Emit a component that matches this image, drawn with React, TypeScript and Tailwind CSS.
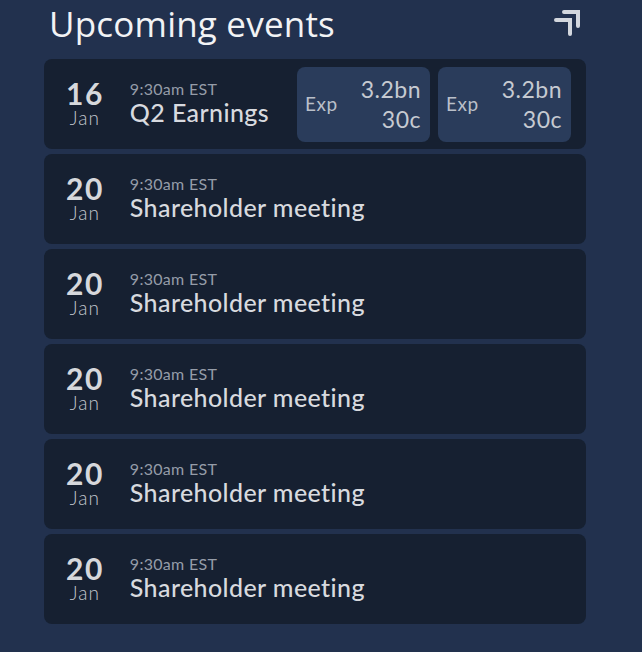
const events = [
  { day: '16', month: 'Jan', time: '9:30am EST', title: 'Q2 Earnings', expected: true },
  { day: '20', month: 'Jan', time: '9:30am EST', title: 'Shareholder meeting' },
  { day: '20', month: 'Jan', time: '9:30am EST', title: 'Shareholder meeting' },
  { day: '20', month: 'Jan', time: '9:30am EST', title: 'Shareholder meeting' },
  { day: '20', month: 'Jan', time: '9:30am EST', title: 'Shareholder meeting' },
  { day: '20', month: 'Jan', time: '9:30am EST', title: 'Shareholder meeting' },
];

function ExpandIcon() {
  return (
    <svg width="30" height="30" viewBox="0 0 30 30" fill="none" stroke="#d3d7de" strokeWidth="4" strokeLinecap="round">
      <path d="M12 4H26V18" />
      <path d="M4 12H18V26" />
    </svg>
  );
}

function ExpBox() {
  return (
    <div className="flex h-[75px] w-[133px] items-center justify-between rounded-lg bg-[#2a3c5b] pl-2 pr-[9px]">
      <span className="text-[19px] tracking-[0.5px] text-[#b9bfc9]">Exp</span>
      <div className="flex flex-col items-end text-[23px] leading-[30px] tracking-[0.5px] text-[#c6cad1]">
        <span>3.2bn</span>
        <span>30c</span>
      </div>
    </div>
  );
}

export default function App() {
  return (
    <div className="min-h-[652px] w-[642px] bg-[#22314e] font-['Lato',sans-serif]">
      <div className="ml-[44px] w-[542px]">
        {/* Header */}
        <div className="flex h-[59px] items-start justify-between pl-[5px] pr-[4px]">
          <h2 className="font-['Open_Sans',sans-serif] text-[35px] leading-[48px] tracking-[0.2px] text-[#f2f3f5]">Upcoming events</h2>
          <div className="mt-[8px]">
            <ExpandIcon />
          </div>
        </div>

        {/* Events */}
        <div className="flex flex-col gap-[5px]">
          {events.map((ev, i) => (
            <div key={i} className="flex h-[90px] items-center rounded-lg bg-[#162031] pl-[22px] pr-[15px]">
              <div className="mb-[3px] flex flex-col items-center">
                <span className="text-[30px] font-bold leading-[30px] tracking-[1.5px] text-[#d6d8dc]">{ev.day}</span>
                <span className="text-[19px] font-light leading-[20px] tracking-[1px] text-[#c3c7ce]">{ev.month}</span>
              </div>
              <div className="mb-[3px] ml-[26px] flex flex-col">
                <span className="text-[16px] leading-[18px] tracking-[0.3px] text-[#959ca8]">{ev.time}</span>
                <span className="text-[25px] font-medium leading-[28px] tracking-[0.4px] text-[#d8dadf]">{ev.title}</span>
              </div>
              {ev.expected && (
                <div className="ml-auto flex gap-2">
                  <ExpBox />
                  <ExpBox />
                </div>
              )}
            </div>
          ))}
        </div>
      </div>
    </div>
  );
}
